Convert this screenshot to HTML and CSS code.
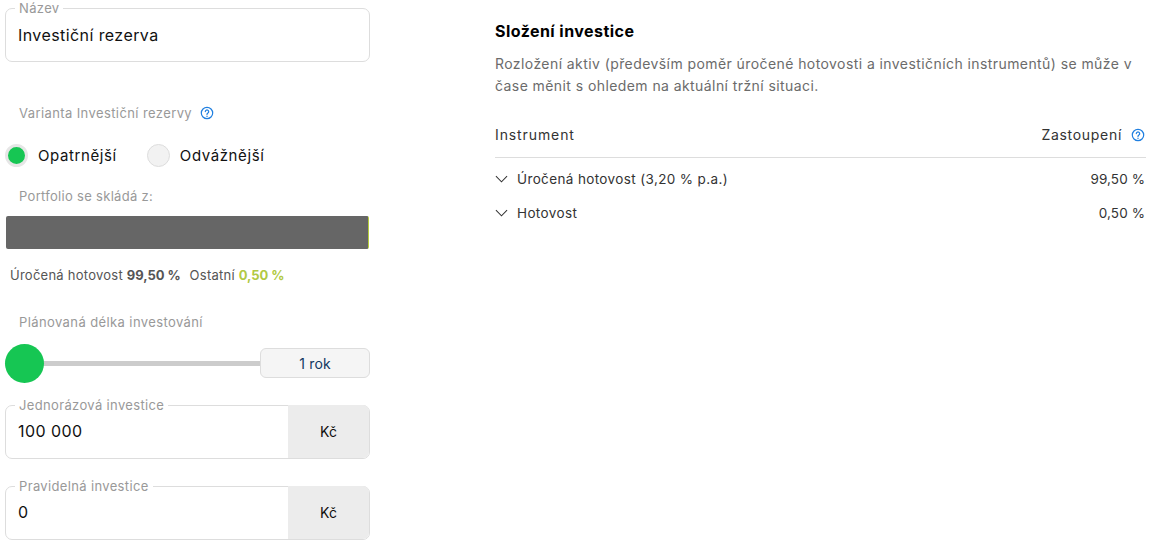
FILE: index.html
```html
<!DOCTYPE html>
<html lang="cs">
<head>
  <meta charset="UTF-8" />
  <title>Investiční rezerva</title>
  <meta name="viewport" content="width=device-width, initial-scale=1" />
  <link rel="stylesheet" href="styles.css">
</head>
<body>

  <div class="page">

    <!-- Form column -->
    <div class="form">
      <fieldset class="field field-name">
        <legend>Název</legend>
        <div class="value">Investiční rezerva</div>
      </fieldset>

      <div class="label label-variant">
        Varianta Investiční rezervy
        <svg class="help" viewBox="0 0 14 14"><circle cx="7" cy="7" r="5.7"/><path d="M5.3 5.6a1.7 1.7 0 1 1 2.6 1.5c-.6.4-.9.7-.9 1.4"/><path d="M7 10.1v.3"/></svg>
      </div>

      <div class="radios">
        <div class="radio"><span class="dot dot-on"></span>Opatrnější</div>
        <div class="radio"><span class="dot"></span>Odvážnější</div>
      </div>

      <div class="label label-portfolio">Portfolio se skládá z:</div>
      <div class="bar"><div class="bar-main"></div><div class="bar-other"></div></div>
      <div class="legend-row">
        <span>Úročená hotovost <b>99,50 %</b></span>
        <span>Ostatní <b class="green">0,50 %</b></span>
      </div>

      <div class="label label-length">Plánovaná délka investování</div>
      <div class="slider-row">
        <div class="slider"><span class="knob"></span></div>
        <div class="years">1 rok</div>
      </div>

      <fieldset class="field field-money">
        <legend>Jednorázová investice</legend>
        <div class="value">100 000</div>
        <div class="unit">Kč</div>
      </fieldset>

      <fieldset class="field field-money">
        <legend>Pravidelná investice</legend>
        <div class="value">0</div>
        <div class="unit">Kč</div>
      </fieldset>
    </div>

    <!-- Composition column -->
    <div class="composition">
      <h3>Složení investice</h3>
      <p>Rozložení aktiv (především poměr úročené hotovosti a investičních instrumentů) se může v čase měnit s ohledem na aktuální tržní situaci.</p>

      <div class="table-head">
        <span class="head-left">Instrument</span>
        <span class="head-right">
          Zastoupení
          <svg class="help" viewBox="0 0 14 14"><circle cx="7" cy="7" r="5.7"/><path d="M5.3 5.6a1.7 1.7 0 1 1 2.6 1.5c-.6.4-.9.7-.9 1.4"/><path d="M7 10.1v.3"/></svg>
        </span>
      </div>

      <div class="table-row">
        <span class="row-name"><svg class="chevron" viewBox="0 0 14 8"><path d="M1 1l6 6 6-6"/></svg>Úročená hotovost (3,20 % p.a.)</span>
        <span>99,50 %</span>
      </div>
      <div class="table-row">
        <span class="row-name"><svg class="chevron" viewBox="0 0 14 8"><path d="M1 1l6 6 6-6"/></svg>Hotovost</span>
        <span>0,50 %</span>
      </div>
    </div>

  </div>

</body>
</html>
```

FILE: styles.css
```css
body {
  margin: 0;
  font-family: Inter, "Noto Sans", sans-serif;
  background: #ffffff;
  color: #111111;
}

.page {
  display: flex;
  gap: 125px;
  padding: 0 5px;
}

.form {
  width: 365px;
  flex-shrink: 0;
}

.composition {
  flex: 1;
  padding-top: 21px;
}

/* Notched input boxes */
.field {
  display: flex;
  margin: 0;
  padding: 0;
  height: 60px;
  box-sizing: border-box;
  border: 1px solid #dddddd;
  border-radius: 7px;
}

.field legend {
  margin-left: 9px;
  padding: 0 4px;
  font-size: 13px;
  line-height: 1;
  letter-spacing: 0.35px;
  color: #999999;
}

.field-name {
  margin-top: 2px;
}

.value {
  flex: 1;
  padding: 7px 12px 0;
  font-size: 16px;
  line-height: 24px;
  letter-spacing: 0.42px;
  color: #111111;
}

.field-name .value {
  padding-top: 8px;
}

.unit {
  width: 81px;
  margin-top: -7px;
  background: #ececec;
  border-radius: 0 6px 6px 0;
  font-size: 14px;
  line-height: 54px;
  text-align: center;
}

.field-money {
  margin-top: 21px;
}

/* Grey captions */
.label {
  padding-left: 14px;
  font-size: 13px;
  line-height: 16px;
  letter-spacing: 0.4px;
  color: #999999;
}

.label-variant {
  display: flex;
  align-items: center;
  gap: 8px;
  margin-top: 43px;
}

.label-portfolio {
  margin-top: 21px;
  letter-spacing: 0.3px;
}

.label-length {
  margin-top: 31px;
}

.help {
  width: 14px;
  height: 14px;
  flex-shrink: 0;
  fill: none;
  stroke: #1f7fe0;
  stroke-width: 1.2;
  stroke-linecap: round;
}

.radios {
  display: flex;
  gap: 30px;
  margin-top: 23px;
}

.radio {
  display: flex;
  align-items: center;
  gap: 10px;
  font-size: 15px;
  line-height: 23px;
  letter-spacing: 0.6px;
}

.dot {
  width: 23px;
  height: 23px;
  box-sizing: border-box;
  border: 1px solid #dddddd;
  border-radius: 50%;
  background: #f2f2f2;
}

.dot-on {
  background: #16c653;
  border: 3px solid #e6e6e6;
}

/* Portfolio bar */
.bar {
  display: flex;
  height: 33px;
  margin: 12px 1px 0;
  border-radius: 2px;
  overflow: hidden;
}

.bar-main {
  flex: 1;
  background: #666666;
}

.bar-other {
  width: 1px;
  background: #b5cc3c;
}

.legend-row {
  display: flex;
  gap: 9px;
  margin-top: 18px;
  padding-left: 5px;
  font-size: 13px;
  line-height: 16px;
  letter-spacing: 0.25px;
  color: #555555;
}

.legend-row b {
  font-weight: 700;
  letter-spacing: -0.05px;
}

.green {
  color: #b1c943;
}

/* Slider */
.slider-row {
  display: flex;
  align-items: center;
  margin-top: 18px;
}

.slider {
  position: relative;
  flex: 1;
  height: 5px;
  background: #cccccc;
}

.knob {
  position: absolute;
  left: 0;
  top: -17px;
  width: 39px;
  height: 39px;
  border-radius: 50%;
  background: #16c653;
}

.years {
  width: 108px;
  height: 28px;
  border: 1px solid #dddddd;
  border-radius: 6px;
  background: #f5f5f5;
  font-size: 14px;
  line-height: 30px;
  letter-spacing: 0.2px;
  text-align: center;
  color: #12385f;
}

/* Right side */
h3 {
  margin: 0;
  font-size: 16px;
  font-weight: 700;
  line-height: 20px;
  letter-spacing: 0.45px;
  color: #000000;
}

p {
  margin: 12px 0 0;
  font-size: 14px;
  line-height: 22px;
  letter-spacing: 0.42px;
  color: #6b6b6b;
}

.table-head {
  display: flex;
  justify-content: space-between;
  align-items: center;
  height: 45px;
  margin-top: 15px;
  margin-bottom: 4px;
  border-bottom: 1px solid #dddddd;
  font-size: 14px;
  letter-spacing: 0.7px;
  color: #333333;
}

.head-left {
  letter-spacing: 0.9px;
}

.head-right {
  display: flex;
  align-items: center;
  gap: 9px;
  padding-right: 1px;
}

.table-row {
  display: flex;
  justify-content: space-between;
  align-items: center;
  height: 34px;
  padding-right: 1px;
  font-size: 13.5px;
  letter-spacing: 0.1px;
  color: #333333;
}

.row-name {
  display: flex;
  align-items: center;
  gap: 9px;
  letter-spacing: 0.37px;
}

.chevron {
  width: 13px;
  height: 8px;
  fill: none;
  stroke: #333333;
  stroke-width: 1.1;
}
```
